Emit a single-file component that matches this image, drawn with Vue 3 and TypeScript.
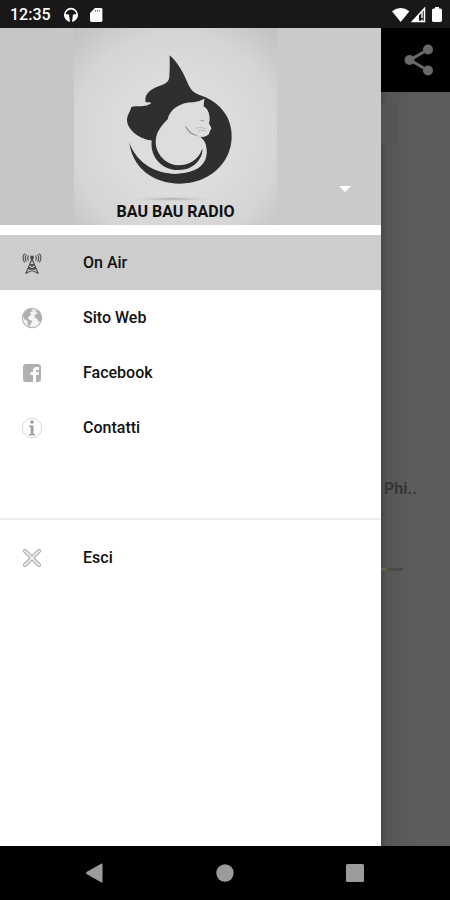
<script setup lang="ts">
import { ref } from 'vue'

type IconName = 'tower' | 'globe' | 'facebook' | 'info' | 'close'

interface MenuItem {
  label: string
  icon: IconName
}

const items: MenuItem[] = [
  { label: 'On Air', icon: 'tower' },
  { label: 'Sito Web', icon: 'globe' },
  { label: 'Facebook', icon: 'facebook' },
  { label: 'Contatti', icon: 'info' },
]
const exitItems: MenuItem[] = [{ label: 'Esci', icon: 'close' }]
const groups: MenuItem[][] = [items, exitItems]

const current = ref<string>('On Air')
</script>

<template>
  <div class="screen">
    <header class="status">
      <span class="clock">12:35</span>
      <svg class="status-icon" viewBox="0 0 16 16" aria-hidden="true">
        <path d="M3.6 12.2A6.2 6.2 0 1 1 12.4 12.2" fill="none" stroke="#fff" stroke-width="1.600" />
        <path d="M1 7 6 7.600 7 15Q1.400 13.400 1 7ZM15 7 10 7.600 9 15Q14.600 13.400 15 7Z" fill="#fff" />
      </svg>
      <svg class="status-icon" viewBox="0 0 16 16" aria-hidden="true">
        <path d="M6 1h6q1.400 0 1.400 1.400V13.600Q13.400 15 12 15H2.400Q1 15 1 13.600V6Z" fill="#fff" />
        <path d="M6.500 3v1.500M8.500 3v1.500M10.500 3v1.500" stroke="#666" stroke-width="1" />
      </svg>
      <svg class="signals" viewBox="0 0 52 18" aria-hidden="true">
        <path d="M0 5.200Q8.700-1.400 17.400 5.200L8.700 16Z" fill="#fff" />
        <path d="M32.500 2.500V15.400H20.500Z" fill="none" stroke="#fff" stroke-width="1.500" />
        <path d="M20 15.600 27 8.200V15.600Z" fill="#fff" />
        <path d="M30 6V12M30 13.400V15" stroke="#fff" stroke-width="1.400" />
        <path d="M43 1h4v1.500h1.300q1.700 0 1.700 1.700v10.400q0 1.400-1.400 1.400h-7.200q-1.400 0-1.400-1.400V4.200q0-1.700 1.700-1.700H43Z" fill="#fff" />
      </svg>
    </header>

    <div class="body">
      <aside class="drawer">
        <div class="banner">
          <figure class="cover">
            <svg class="art" viewBox="-78 -36 609 591" role="img" aria-label="Bau Bau Radio">
              <defs>
                <radialGradient id="contact"><stop offset="0" stop-color="#aaa" /><stop offset="1" stop-color="#ccc" stop-opacity="0" /></radialGradient>
              </defs>
              <ellipse cx="218" cy="477" rx="125" ry="7" fill="url(#contact)" />
              <path
                d="M209 46C238 72 252 104 264 131C275 158 292 162 315 171C363 192 397 235 395 292C393 373 324 431 240 431C157 431 96 381 88 307C106 359 155 398 225 401C286 401 320 377 320 337C319 311 306 294 285 287L155 302C122 298 82 272 81 240C82 222 92 214 94 201C112 196 136 201 145 194L153 191L150 187L137 187C134 172 140 158 157 148C178 134 206 135 208 111Q210 75 209 46Z"
                fill="#302e30"
              />
              <path
                d="M313 176L310 198C330 213 330 235 327 251L334 265L328 275C329 286 315 291 299 290C316 301 322 319 319 340C310 376 279 400 225 401C157 400 108 363 88 307C76 280 117 299 155 302Z"
                fill="#dddddd"
              />
              <path
                d="M155 302C152 271 174 246 190 232C203 205 222 184 258 183Q287 184 308 176L285 260L308 330Q298 376 256 388C194 401 149 355 155 302Z"
                fill="#302e30"
              />
              <path
                d="M313 176Q299 184 281 187C237 187 209 210 203 238C183 259 168 276 167 305C167 343 199 376 239 376C278 374 301 347 307 326C311 346 302 363 287 374Q304 364 315 342C322 312 312 298 299 290C315 292 328 284 328 275L334 265L327 251C330 230 329 211 310 198Z"
                fill="#dddddd"
              />
              <path d="M168 329C183 367 213 379 245 377C277 374 298 355 307 327C307 356 287 381 250 387C207 390 178 365 168 329Z" fill="#302e30" />
              <path d="M255 257C262 278 281 288 303 290C280 284 266 273 259 260Z" fill="#888" />
              <path d="M299 240Q307 237 315 244L302 242Z" fill="#999" />
              <path d="M287 265Q299 258 317 266M294 273Q304 267 318 273" fill="none" stroke="#bdbdbd" stroke-width="3" />
            </svg>
            <figcaption class="title">BAU BAU RADIO</figcaption>
          </figure>
          <button class="expand" type="button" aria-label="Account">
            <svg viewBox="0 0 12 6" aria-hidden="true"><path d="M0 0H12L6 6Z" fill="#fff" /></svg>
          </button>
        </div>

        <nav class="menu">
          <ul v-for="(group, index) in groups" :key="index" class="group">
            <li v-for="item in group" :key="item.label">
              <button class="item" :class="{ active: current === item.label }" type="button" @click="current = item.label">
                <svg v-if="item.icon === 'tower'" class="icon" viewBox="0 0 22 22" aria-hidden="true">
                  <g fill="none" stroke="#4c4c4c" stroke-width="1.100">
                    <path d="M11 7 5 21M11 7l6 14M8.600 12.500h4.800M7 16.500h8M8.600 12.500l6.400 4M13.400 12.500 7 16.500M7 16.500l8.500 4M15 16.500l-8.500 4M4 21h3M15 21h3" />
                    <path d="M7.500 3.500Q5.800 6 7.500 8.500M5.500 2.500Q3 6 5.500 9.500M3.700 1.500Q.4 6 3.700 10.500M14.500 3.500Q16.200 6 14.500 8.500M16.500 2.500Q19 6 16.500 9.500M18.300 1.500Q21.600 6 18.300 10.500" />
                  </g>
                  <circle cx="11" cy="5.500" r="2" fill="#4c4c4c" />
                </svg>
                <svg v-else-if="item.icon === 'globe'" class="icon" viewBox="0 0 22 22" aria-hidden="true">
                  <circle cx="11" cy="11" r="9.700" fill="#f4f4f4" stroke="#b8b8b8" stroke-width="1.200" />
                  <path d="M2 8Q5 2 10 1.500L12 4 9 5.500 10 8 6.500 10.500 8.500 13 11 13.500 10.500 16 8 20Q6 18 6.500 14L3 12ZM14 4l3-1q3.500 3 4 7l-1 4-2.500 1-1-3-3-1.500.5-3L17 6.500Z" fill="#b0b0b0" />
                </svg>
                <svg v-else-if="item.icon === 'facebook'" class="icon" viewBox="0 0 22 22" aria-hidden="true">
                  <rect x="2" y="2" width="18" height="18" rx="3" fill="#b0b0b0" />
                  <path d="M12 20v-7H9.500v-3H12V8.500Q12 5 15.500 5H18v3h-1.800q-1.200 0-1.200 1.200v.8h3l-.5 3H15v7Z" fill="#fff" />
                </svg>
                <svg v-else-if="item.icon === 'info'" class="icon" viewBox="0 0 22 22" aria-hidden="true">
                  <circle cx="11" cy="11" r="9.800" fill="none" stroke="#dadada" />
                  <circle cx="11" cy="5" r="1.700" fill="#999" />
                  <path d="M8 8.500h4.500V17H14v1.500H8V17h1.700v-7H8Z" fill="#a0a0a0" />
                </svg>
                <svg v-else class="icon" viewBox="0 0 22 22" aria-hidden="true">
                  <path d="M4 4l14 14M18 4 4 18" stroke="#a8a8a8" stroke-width="4" stroke-linecap="round" />
                  <path d="M4 4l14 14M18 4 4 18" stroke="#ececec" stroke-width="2" stroke-linecap="round" />
                </svg>
                <span>{{ item.label }}</span>
              </button>
            </li>
          </ul>
        </nav>
      </aside>

      <main class="page">
        <div class="toolbar">
          <button class="share" type="button" aria-label="Share">
            <svg viewBox="0 0 30 32" aria-hidden="true">
              <path d="M24 5.500 6 16 24 26.500" fill="none" stroke="#696969" stroke-width="3" />
              <g fill="#696969"><circle cx="24" cy="5.500" r="5" /><circle cx="5.500" cy="16" r="5" /><circle cx="24" cy="26.500" r="5" /></g>
            </svg>
          </button>
        </div>
        <div class="cover-edge"></div>
        <p class="track">Phi..</p>
        <div class="level"></div>
      </main>
    </div>

    <footer class="softkeys">
      <button type="button" aria-label="Back">
        <svg viewBox="0 0 20 20" aria-hidden="true"><path d="M17.500 1V19Q17.500 20 16.500 19.400L1.500 11Q.5 10 1.500 9L16.500.6Q17.500 0 17.500 1Z" fill="#9b9b9b" /></svg>
      </button>
      <button type="button" aria-label="Home">
        <svg viewBox="0 0 20 20" aria-hidden="true"><circle cx="10" cy="10" r="8.700" fill="#9b9b9b" /></svg>
      </button>
      <button type="button" aria-label="Recent apps">
        <svg viewBox="0 0 20 20" aria-hidden="true"><rect x="1" y="1" width="18" height="18" rx="1.500" fill="#9b9b9b" /></svg>
      </button>
    </footer>
  </div>
</template>

<style>
body {
  margin: 0;
}
</style>

<style scoped>
.screen {
  display: flex;
  flex-direction: column;
  min-height: 100vh;
  font-family: Roboto, 'Liberation Sans', sans-serif;
  color: #111;
  background: #000;
}
button {
  margin: 0;
  padding: 0;
  border: 0;
  background: none;
  font: inherit;
  color: inherit;
  cursor: pointer;
}
svg {
  display: block;
}
.status {
  display: flex;
  align-items: center;
  gap: 10px;
  box-sizing: border-box;
  height: 28px;
  padding: 2px 6px 0 10px;
  background: #181818;
  color: #fff;
}
.clock {
  margin-right: 2px;
  font-size: 16px;
  font-weight: 500;
  line-height: 24px;
}
.status-icon {
  width: 16px;
  height: 16px;
}
.signals {
  width: 52px;
  height: 18px;
  margin-left: auto;
}
.body {
  flex: 1;
  display: grid;
  grid-template-columns: minmax(0, 1fr) 69px;
}
.drawer {
  background: #fff;
}
.banner {
  display: flex;
  justify-content: space-between;
  align-items: flex-end;
  height: 197px;
  padding: 0 30px 0 74px;
  background: linear-gradient(90deg, #c5c5c6, #c8cacb 75%, #cbcbcb);
}
.cover {
  display: grid;
  width: 203px;
  height: 197px;
  margin: 0;
  background: radial-gradient(circle at 50% 55%, #dcdcdc 40%, #d5d5d5 70%, #c0c0c0 100%);
}
.art {
  grid-area: 1 / 1;
  width: 203px;
  height: 197px;
}
.title {
  grid-area: 1 / 1;
  align-self: end;
  justify-self: center;
  padding-bottom: 2px;
  font-size: 16px;
  font-weight: 700;
  line-height: 22px;
  white-space: nowrap;
}
.expand {
  padding: 33px 0;
}
.expand svg {
  width: 12px;
  height: 6px;
}
.menu {
  padding-top: 10px;
}
.group {
  margin: 0;
  padding: 0;
  list-style: none;
}
.group + .group {
  margin-top: 63px;
  padding-top: 10px;
  border-top: 2px solid #ededed;
}
.item {
  display: flex;
  align-items: center;
  gap: 40px;
  width: 100%;
  height: 55px;
  padding: 0 21px;
  font-size: 16px;
  font-weight: 500;
  line-height: 24px;
  text-align: left;
}
.item.active {
  background: #cdcdcd;
}
.icon {
  width: 22px;
  height: 22px;
}
.page {
  background: linear-gradient(90deg, #484848, #555 6px, #5c5c5c 30px, #5d5d5d);
}
.toolbar {
  display: flex;
  align-items: center;
  justify-content: center;
  height: 64px;
  padding-left: 6px;
  background: #000;
}
.share svg {
  width: 30px;
  height: 32px;
}
.cover-edge {
  width: 16px;
  height: 40px;
  margin-top: 12px;
  background: #545454;
}
.track {
  margin: 333px 0 0;
  padding-left: 3px;
  font-size: 16px;
  font-weight: 700;
  line-height: 24px;
  color: #363636;
}
.level {
  width: 16px;
  height: 3px;
  margin-top: 67px;
  border-left: 6px solid #665d42;
  background: #4b4b4b;
}
.softkeys {
  display: flex;
  justify-content: space-between;
  align-items: center;
  height: 54px;
  padding: 0 85px;
}
.softkeys svg {
  width: 20px;
  height: 20px;
}
</style>
